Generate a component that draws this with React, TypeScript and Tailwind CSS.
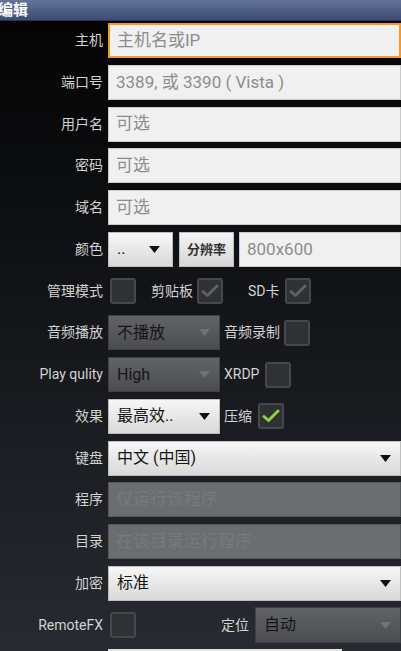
import React from "react"

const font = { fontFamily: 'Roboto, "Noto Sans CJK SC", "Noto Sans", sans-serif' }

function Label({ children }: { children: React.ReactNode }) {
    return (
        <div className="w-[108px] shrink-0 pr-[5px] text-right text-[14px] text-[#d2d2d2]">{children}</div>
    )
}

function TextInput({ ph, focus, disabled, className = "" }: { ph: string; focus?: boolean; disabled?: boolean; className?: string }) {
    const base = disabled
        ? "bg-[#6b6d71] border-[#55575b] text-[#77797d]"
        : "bg-[#f0f0f0] border-[#c9c9c9] text-[#8d8d8d]"
    return (
        <div
            className={`h-[35px] flex items-center pl-[7px] text-[17px] border ${base} ${focus ? "border-2 border-[#f39a2b] pl-[6px]" : ""} ${className}`}
        >
            {ph}
        </div>
    )
}

function Arrow({ color }: { color: string }) {
    return (
        <svg width="11" height="7" viewBox="0 0 11 7" className="shrink-0">
            <path d="M0 0 L11 0 L5.5 7 Z" fill={color} />
        </svg>
    )
}

function Select({ text, dark, className = "" }: { text: string; dark?: boolean; className?: string }) {
    const bg = dark
        ? "bg-gradient-to-b from-[#616367] to-[#4b4d51] border-[#3f4145]"
        : "bg-gradient-to-b from-[#f6f6f6] to-[#d9d9d9] border-[#bdbdbd]"
    return (
        <div className={`h-[35px] flex items-center justify-between pl-[8px] pr-[9px] border ${bg} ${className}`}>
            <span className="text-[16px] text-[#151515]">{text}</span>
            <Arrow color={dark ? "#707276" : "#111"} />
        </div>
    )
}

function Check({ state }: { state?: "gray" | "green" }) {
    return (
        <div className="w-[26px] h-[26px] shrink-0 rounded-[3px] bg-[#2f3135] border-2 border-[#46484d] flex items-center justify-center">
            {state && (
                <svg width="18" height="14" viewBox="0 0 18 14">
                    <path
                        d="M2 7.5 L6.5 11.5 L16 2"
                        fill="none"
                        stroke={state === "green" ? "#8fd43c" : "#5e6064"}
                        strokeWidth="3"
                        strokeLinecap="round"
                        strokeLinejoin="round"
                    />
                </svg>
            )}
        </div>
    )
}

export default function App() {
    return (
        <div style={font} className="w-[401px] h-[651px] overflow-hidden bg-gradient-to-b from-[#040404] via-[#14161a] to-[#272a30]">
            {/* Title bar */}
            <div className="h-[21px] bg-gradient-to-b from-[#63739c] to-[#3e4c73] flex items-center border-b border-[#2a3350]">
                <span className="ml-[-2px] text-[15px] font-bold text-white leading-none">编辑</span>
            </div>

            <div className="flex flex-col gap-[6.75px] pt-[2px]">
                <div className="flex items-center h-[35px]">
                    <Label>主机</Label>
                    <TextInput ph="主机名或IP" focus className="flex-1" />
                </div>
                <div className="flex items-center h-[35px]">
                    <Label>端口号</Label>
                    <TextInput ph="3389, 或 3390 ( Vista )" className="flex-1" />
                </div>
                <div className="flex items-center h-[35px]">
                    <Label>用户名</Label>
                    <TextInput ph="可选" className="flex-1" />
                </div>
                <div className="flex items-center h-[35px]">
                    <Label>密码</Label>
                    <TextInput ph="可选" className="flex-1" />
                </div>
                <div className="flex items-center h-[35px]">
                    <Label>域名</Label>
                    <TextInput ph="可选" className="flex-1" />
                </div>
                <div className="flex items-center h-[35px]">
                    <Label>颜色</Label>
                    <Select text=".." className="w-[65px] pr-[12px]" />
                    <div className="ml-[6px] h-[35px] w-[55px] flex items-center justify-center border border-[#bdbdbd] bg-gradient-to-b from-[#f4f4f4] to-[#d6d6d6] text-[13px] font-bold text-[#333]">
                        分辨率
                    </div>
                    <TextInput ph="800x600" className="ml-[5px] flex-1" />
                </div>
                <div className="flex items-center h-[35px]">
                    <Label>管理模式</Label>
                    <div className="ml-[2px]"><Check /></div>
                    <div className="ml-[15px] text-[14px] text-[#d2d2d2]">剪贴板</div>
                    <div className="ml-[4px]"><Check state="gray" /></div>
                    <div className="ml-[25px] text-[14px] text-[#d2d2d2]">SD卡</div>
                    <div className="ml-[5px]"><Check state="gray" /></div>
                </div>
                <div className="flex items-center h-[35px]">
                    <Label>音频播放</Label>
                    <Select text="不播放" dark className="w-[112px]" />
                    <div className="ml-[4px] text-[14px] text-[#d2d2d2]">音频录制</div>
                    <div className="ml-[4px]"><Check /></div>
                </div>
                <div className="flex items-center h-[35px]">
                    <Label>Play qulity</Label>
                    <Select text="High" dark className="w-[112px]" />
                    <div className="ml-[4px] text-[14px] text-[#d2d2d2]">XRDP</div>
                    <div className="ml-[6px]"><Check /></div>
                </div>
                <div className="flex items-center h-[35px]">
                    <Label>效果</Label>
                    <Select text="最高效.." className="w-[112px]" />
                    <div className="ml-[4px] text-[14px] text-[#d2d2d2]">压缩</div>
                    <div className="ml-[6px]"><Check state="green" /></div>
                </div>
                <div className="flex items-center h-[35px]">
                    <Label>键盘</Label>
                    <Select text="中文 (中国)" className="flex-1 pr-[6px]" />
                </div>
                <div className="flex items-center h-[35px]">
                    <Label>程序</Label>
                    <TextInput ph="仅运行该程序" disabled className="flex-1" />
                </div>
                <div className="flex items-center h-[35px]">
                    <Label>目录</Label>
                    <TextInput ph="在该目录运行程序" disabled className="flex-1" />
                </div>
                <div className="flex items-center h-[35px]">
                    <Label>加密</Label>
                    <Select text="标准" className="flex-1 pr-[6px]" />
                </div>
                <div className="flex items-center h-[35px]">
                    <Label>RemoteFX</Label>
                    <div className="ml-[2px]"><Check /></div>
                    <div className="ml-[85px] text-[14px] text-[#d2d2d2]">定位</div>
                    <Select text="自动" dark className="ml-[6px] flex-1 h-[36px]" />
                </div>
                <div className="flex items-center h-[35px]">
                    <div className="w-[108px] shrink-0" />
                    <div className="w-[234px] h-[35px] bg-[#cfcfcf] border-t-2 border-[#e2e2e2]" />
                </div>
            </div>
        </div>
    )
}
